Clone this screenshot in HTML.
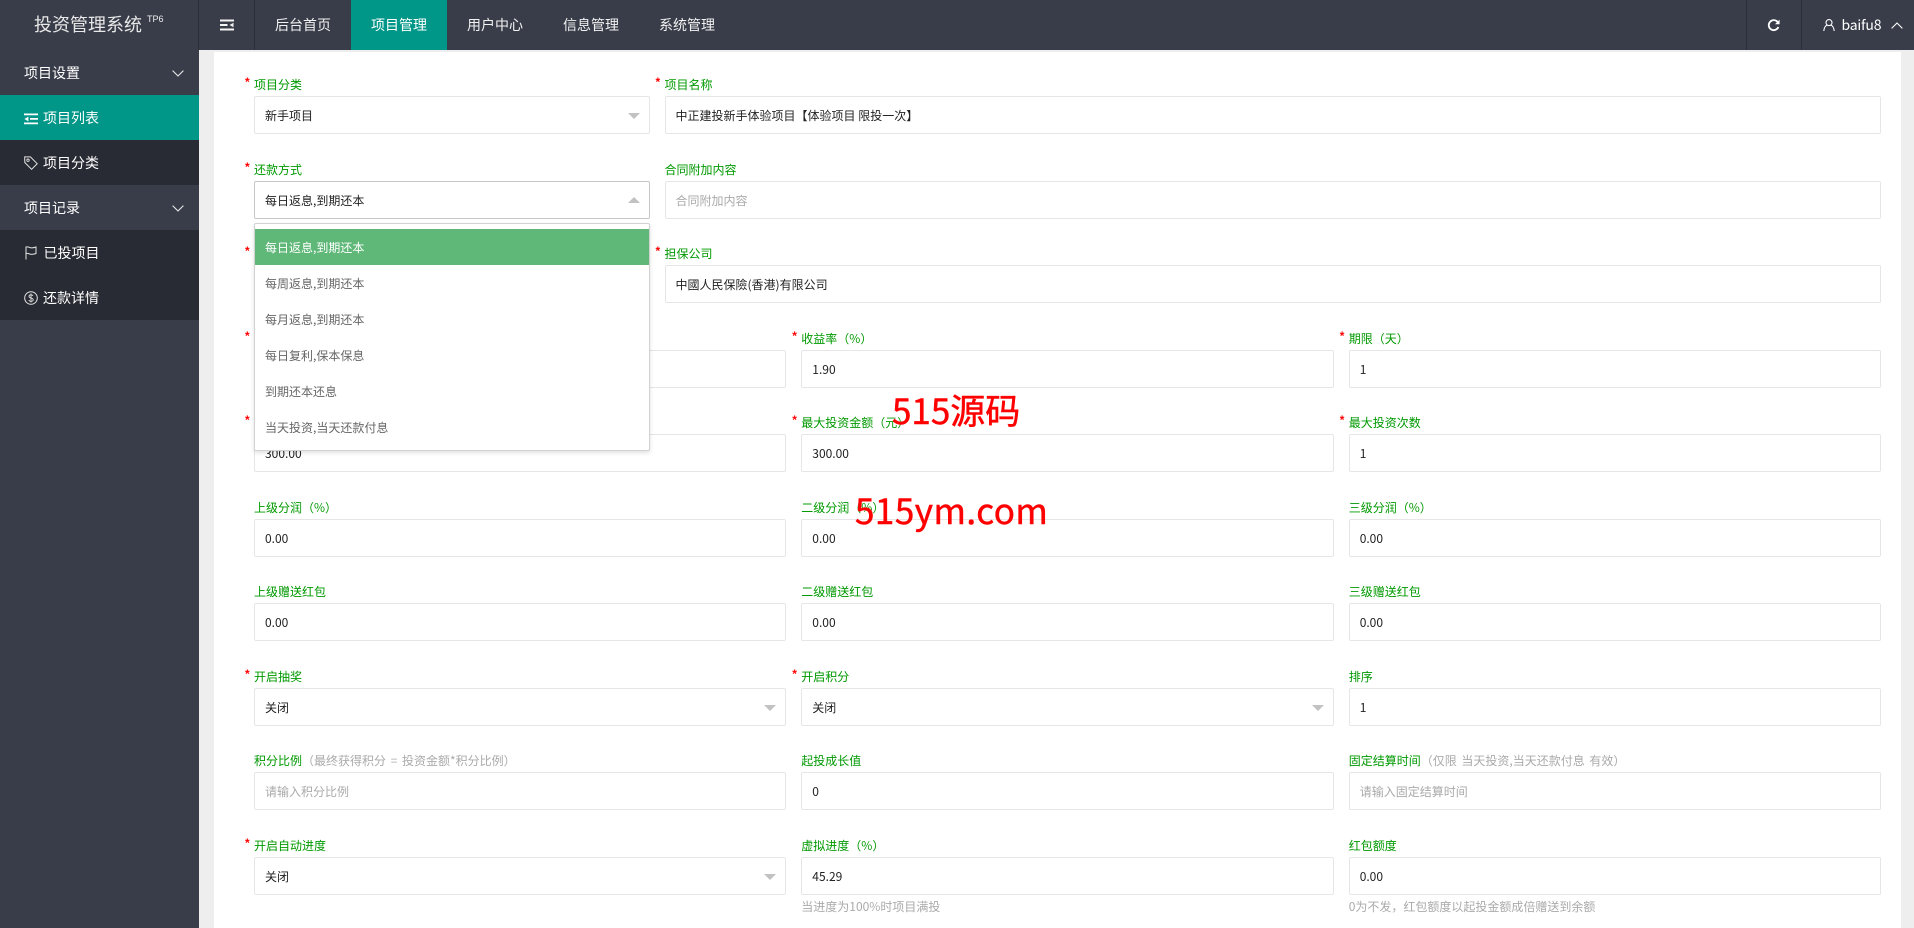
<!DOCTYPE html>
<html lang="zh-CN">
<head>
<meta charset="utf-8">
<title>投资管理系统</title>
<style>
*{box-sizing:border-box;margin:0;padding:0}
html,body{width:1914px;height:928px;overflow:hidden;background:#eeeeee}
body{position:relative;font-family:"Liberation Sans","Noto Sans CJK SC",sans-serif;font-size:12px;color:#333}
.t,.fd,.fd *{font-family:"Noto Sans CJK SC","Liberation Sans",sans-serif}
#hd{position:absolute;left:0;top:0;width:1914px;height:50px;background:#393d49;color:#fff;font-family:"Noto Sans CJK SC",sans-serif}
#hd .sep{position:absolute;top:0;width:1px;height:50px;background:#2c2f39}
#hd .nav{position:absolute;top:0;height:50px;width:96px;line-height:51px;text-align:center;font-size:14px;color:#f2f2f2}
#hd .nav.on{background:#009688;color:#fff}
#logo{position:absolute;left:34px;top:10px;font-size:18px;line-height:29px;color:#e8e8e8;white-space:nowrap}
#logo sup{position:absolute;left:113px;top:3px;font:9px/12px "Liberation Sans",sans-serif;color:#eee}
#sb{position:absolute;left:0;top:50px;width:199px;height:878px;background:#393d49;font-family:"Noto Sans CJK SC",sans-serif;color:#fff;font-size:14px}
#sb .it{position:absolute;left:0;width:199px;height:45px;line-height:46px;white-space:nowrap}
#sb .it span{position:absolute;top:0}
#sb .dk{background:#282b33}
#sb .on{background:#009688}
#sb svg,#hd svg{position:absolute;overflow:visible}
#card{position:absolute;left:214px;top:52px;width:1687px;height:876px;background:#fff}
.fd{position:absolute;height:38px}
.a{left:254px;width:532px}
.b{left:801.3px;width:532.4px}
.c{left:1348.7px;width:532.3px}
.l{left:254px;width:395.5px}
.r{left:664.5px;width:1216.5px}
.box{position:absolute;left:0;top:0;width:100%;height:38px;border:1px solid #e6e6e6;border-radius:2px;background:#fff;padding-left:10px;line-height:38px;font-size:12px;color:#222;white-space:nowrap}
.box.ph{color:#aaa}
.box.fo{border-color:#c6c6c6}
.lb{position:absolute;left:0;top:-20px;height:18px;line-height:18px;font-size:12px;color:#009900;white-space:nowrap}
.lb i{font-style:normal;color:#aaa;word-spacing:2px}
.st{position:absolute;left:-9px;top:-21px;color:#f00;font:bold 12px/14px "Liberation Sans",sans-serif}
.tri{position:absolute;right:9px;top:16px;width:0;height:0;border-left:6px solid transparent;border-right:6px solid transparent;border-top:6px solid #c2c2c2}
.tri.up{border-top:0;border-bottom:6px solid #c2c2c2}
.hp{position:absolute;left:0;top:41px;font-size:12px;line-height:18px;color:#aaa;white-space:nowrap}
#dd{position:absolute;left:254px;top:223px;width:396px;height:228px;background:#fff;border:1px solid #d2d2d2;border-radius:2px;box-shadow:0 2px 4px rgba(0,0,0,.12);padding:5px 0;z-index:5;font-family:"Noto Sans CJK SC",sans-serif}
#dd div{height:36px;line-height:38px;padding-left:10px;color:#666;font-size:12px;white-space:nowrap}
#dd div.on{background:#5fb878;color:#fff}
.wm{position:absolute;color:#f00;font-family:"Noto Sans CJK SC",sans-serif;font-size:35px;line-height:40px;white-space:nowrap;z-index:6;-webkit-text-stroke:.5px #f00}
</style>
</head>
<body>
<div id="hd">
  <div id="logo">投资管理系统<sup>TP6</sup></div>
  <div class="sep" style="left:198px"></div>
  <div class="sep" style="left:254px"></div>
  <svg style="left:220px;top:19px" width="14" height="12" viewBox="0 0 14 12"><path d="M0 .5h14v2H0zM0 5h7.5v2H0zM0 9.5h14v2H0z" fill="#f4f4f4"/><path d="M13.5 3.8v4.4L9.5 6z" fill="#f4f4f4"/></svg>
  <div class="nav" style="left:255px">后台首页</div>
  <div class="nav on" style="left:351px">项目管理</div>
  <div class="nav" style="left:447px">用户中心</div>
  <div class="nav" style="left:543px">信息管理</div>
  <div class="nav" style="left:639px">系统管理</div>
  <div class="sep" style="left:1746px"></div>
  <div class="sep" style="left:1801px"></div>
  <svg style="left:1767px;top:19px" width="13" height="12" viewBox="0 0 13 12"><path d="M10.8 3.2A5 5 0 1 0 11.4 8" fill="none" stroke="#fff" stroke-width="1.8"/><path d="M12.6 .6v4.6H8z" fill="#fff"/></svg>
  <svg style="left:1823px;top:19px" width="12" height="12" viewBox="0 0 12 12"><circle cx="6" cy="3.6" r="3" fill="none" stroke="#fff" stroke-width="1.1"/><path d="M.8 12c.3-3.2 1.8-5.4 3.4-5.9M11.2 12c-.3-3.2-1.8-5.4-3.4-5.9" fill="none" stroke="#fff" stroke-width="1.1"/></svg>
  <div style="position:absolute;left:1841.5px;top:0;line-height:50px;font-size:14px;letter-spacing:-.2px;color:#fff">baifu8</div>
  <svg style="left:1891px;top:22px" width="12" height="7" viewBox="0 0 12 7"><path d="M.6 6.4 6 1l5.4 5.4" fill="none" stroke="#fff" stroke-width="1.1"/></svg>
</div>

<div id="sb">
  <div class="it" style="top:0"><span style="left:24px">项目设置</span><svg style="left:172px;top:20px" width="12" height="7" viewBox="0 0 12 7"><path d="M.6.6 6 6l5.4-5.4" fill="none" stroke="#e8e8e8" stroke-width="1.1"/></svg></div>
  <div class="it on" style="top:45px"><svg style="left:24px;top:18px" width="14" height="12" viewBox="0 0 14 12"><path d="M0 .5h14v1.8H0zM6 5h8v1.8H6zM0 9.5h14v1.800H0z" fill="#fff"/><path d="M.4 6l4-2.400v4.800z" fill="#fff"/></svg><span style="left:43px">项目列表</span></div>
  <div class="it dk" style="top:90px"><svg style="left:24px;top:16px" width="14" height="14" viewBox="0 0 14 14"><path d="M.7.9h5.700l6.800 6.800-5.600 5.600L.8 6.500z" fill="none" stroke="#e4e4e4" stroke-width="1"/><circle cx="4" cy="4.200" r="1.200" fill="none" stroke="#e4e4e4" stroke-width=".9"/></svg><span style="left:43px">项目分类</span></div>
  <div class="it" style="top:135px"><span style="left:24px">项目记录</span><svg style="left:172px;top:20px" width="12" height="7" viewBox="0 0 12 7"><path d="M.6.6 6 6l5.400-5.400" fill="none" stroke="#e8e8e8" stroke-width="1.100"/></svg></div>
  <div class="it dk" style="top:180px"><svg style="left:25px;top:16px" width="12" height="14" viewBox="0 0 12 14"><path d="M1 13.500V1c2.500-.8 3.500.9 5.500.9 1.700 0 3-.4 4.500-.9v6.500c-1.500.6-2.800.9-4.500.9-2 0-3-1.500-5.500-.9" fill="none" stroke="#e4e4e4" stroke-width="1"/></svg><span style="left:43.5px">已投项目</span></div>
  <div class="it dk" style="top:225px"><svg style="left:24px;top:16px" width="14" height="14" viewBox="0 0 14 14"><circle cx="7" cy="7" r="6.300" fill="none" stroke="#e4e4e4" stroke-width="1"/><path d="M9 4.800C8.500 4 7.800 3.800 7 3.800c-1.200 0-2 .6-2 1.600 0 2.200 4.200 1.100 4.200 3.300 0 1-.9 1.600-2.200 1.600-1 0-1.800-.4-2.300-1.200M7 2.500v9" fill="none" stroke="#e4e4e4" stroke-width=".9"/></svg><span style="left:43px">还款详情</span></div>
  <div class="it" style="top:270px;height:608px"></div>
</div>

<div id="card"></div>

<div class="fd l" style="top:96px"><b class="st">*</b><div class="lb">项目分类</div><div class="box">新手项目<span class="tri"></span></div></div>
<div class="fd r" style="top:96px"><b class="st">*</b><div class="lb">项目名称</div><div class="box">中正建投新手体验项目【体验项目 限投一次】</div></div>

<div class="fd l" style="top:181px"><b class="st">*</b><div class="lb">还款方式</div><div class="box fo">每日返息,到期还本<span class="tri up" style="top:15px"></span></div></div>
<div class="fd r" style="top:181px"><div class="lb">合同附加内容</div><div class="box ph">合同附加内容</div></div>

<div class="fd l" style="top:265px"><b class="st">*</b><div class="box"></div></div>
<div class="fd r" style="top:265px"><b class="st">*</b><div class="lb">担保公司</div><div class="box">中國人民保險(香港)有限公司</div></div>

<div class="fd a" style="top:350px"><b class="st">*</b><div class="box"></div></div>
<div class="fd b" style="top:350px"><b class="st">*</b><div class="lb">收益率（%）</div><div class="box">1.90</div></div>
<div class="fd c" style="top:350px"><b class="st">*</b><div class="lb">期限（天）</div><div class="box">1</div></div>

<div class="fd a" style="top:434px"><b class="st">*</b><div class="box">300.00</div></div>
<div class="fd b" style="top:434px"><b class="st">*</b><div class="lb">最大投资金额（元）</div><div class="box">300.00</div></div>
<div class="fd c" style="top:434px"><b class="st">*</b><div class="lb">最大投资次数</div><div class="box">1</div></div>

<div class="fd a" style="top:519px"><div class="lb">上级分润（%）</div><div class="box">0.00</div></div>
<div class="fd b" style="top:519px"><div class="lb">二级分润（%）</div><div class="box">0.00</div></div>
<div class="fd c" style="top:519px"><div class="lb">三级分润（%）</div><div class="box">0.00</div></div>

<div class="fd a" style="top:603px"><div class="lb">上级赠送红包</div><div class="box">0.00</div></div>
<div class="fd b" style="top:603px"><div class="lb">二级赠送红包</div><div class="box">0.00</div></div>
<div class="fd c" style="top:603px"><div class="lb">三级赠送红包</div><div class="box">0.00</div></div>

<div class="fd a" style="top:688px"><b class="st">*</b><div class="lb">开启抽奖</div><div class="box">关闭<span class="tri"></span></div></div>
<div class="fd b" style="top:688px"><b class="st">*</b><div class="lb">开启积分</div><div class="box">关闭<span class="tri"></span></div></div>
<div class="fd c" style="top:688px"><div class="lb">排序</div><div class="box">1</div></div>

<div class="fd a" style="top:772px"><div class="lb">积分比例<i>（最终获得积分 = 投资金额*积分比例）</i></div><div class="box ph">请输入积分比例</div></div>
<div class="fd b" style="top:772px"><div class="lb">起投成长值</div><div class="box">0</div></div>
<div class="fd c" style="top:772px"><div class="lb">固定结算时间<i>（仅限 当天投资,当天还款付息 有效）</i></div><div class="box ph">请输入固定结算时间</div></div>

<div class="fd a" style="top:857px"><b class="st">*</b><div class="lb">开启自动进度</div><div class="box">关闭<span class="tri"></span></div></div>
<div class="fd b" style="top:857px"><div class="lb">虚拟进度（%）</div><div class="box">45.29</div><div class="hp">当进度为100%时项目满投</div></div>
<div class="fd c" style="top:857px"><div class="lb">红包额度</div><div class="box">0.00</div><div class="hp">0为不发，红包额度以起投金额成倍赠送到余额</div></div>

<div id="dd">
  <div class="on">每日返息,到期还本</div>
  <div>每周返息,到期还本</div>
  <div>每月返息,到期还本</div>
  <div>每日复利,保本保息</div>
  <div>到期还本还息</div>
  <div>当天投资,当天还款付息</div>
</div>

<div class="wm" style="left:892px;top:390px">515源码</div>
<div class="wm" style="left:855px;top:490px;letter-spacing:.5px">515ym.com</div>
</body>
</html>
